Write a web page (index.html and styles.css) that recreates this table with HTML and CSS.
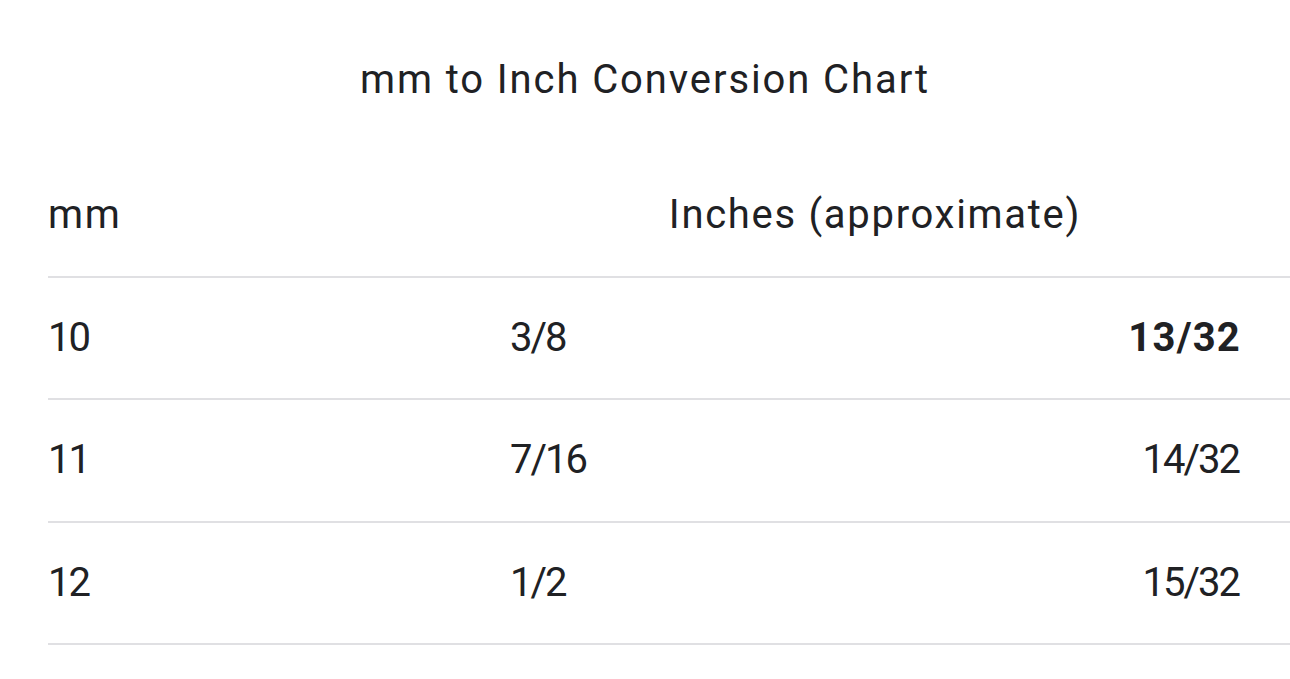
FILE: index.html
```html
<!DOCTYPE html>
<html lang="en">
<head>
<meta charset="utf-8">
<title>mm to Inch Conversion Chart</title>
<link rel="stylesheet" href="styles.css">
</head>
<body>
<div class="page">
  <h1 class="title">mm to Inch Conversion Chart</h1>
  <table class="chart">
    <thead>
      <tr>
        <th class="c1">mm</th>
        <th class="c23" colspan="2">Inches (approximate)</th>
      </tr>
    </thead>
    <tbody>
      <tr>
        <td class="c1">10</td>
        <td class="c2">3/8</td>
        <td class="c3 strong">13/32</td>
      </tr>
      <tr>
        <td class="c1">11</td>
        <td class="c2">7/16</td>
        <td class="c3">14/32</td>
      </tr>
      <tr>
        <td class="c1">12</td>
        <td class="c2">1/2</td>
        <td class="c3">15/32</td>
      </tr>
    </tbody>
  </table>
</div>
</body>
</html>
```
FILE: styles.css
```css
html, body {
  margin: 0;
  padding: 0;
  background: #ffffff;
}
body {
  font-family: Roboto, "Liberation Sans", sans-serif;
  color: #202124;
}
.page {
  padding: 50px 0 0 48px;
}
.title {
  margin: 0 0 45px -48px;
  font-size: 40px;
  font-weight: 400;
  line-height: 60px;
  height: 60px;
  text-align: center;
  letter-spacing: 1.9px;
}
.chart {
  width: 1242px;
  border-collapse: collapse;
  font-size: 40px;
}
.chart th,
.chart td {
  font-weight: 400;
  height: 120.6px;
  padding: 0;
  border-bottom: 2px solid #e0e0e3;
  vertical-align: middle;
  line-height: 48px;
}
.chart th {
  letter-spacing: 1.7px;
}
.chart td {
  letter-spacing: -2px;
}
.c1 {
  width: 462px;
  text-align: left;
}
.c23 {
  text-align: center;
  padding-right: 50px !important;
}
.c2 {
  text-align: left;
}
.c3 {
  text-align: right;
  padding-right: 51px !important;
}
.chart td.strong {
  font-weight: 700;
  letter-spacing: 1.2px;
  padding-right: 49px !important;
}
```
